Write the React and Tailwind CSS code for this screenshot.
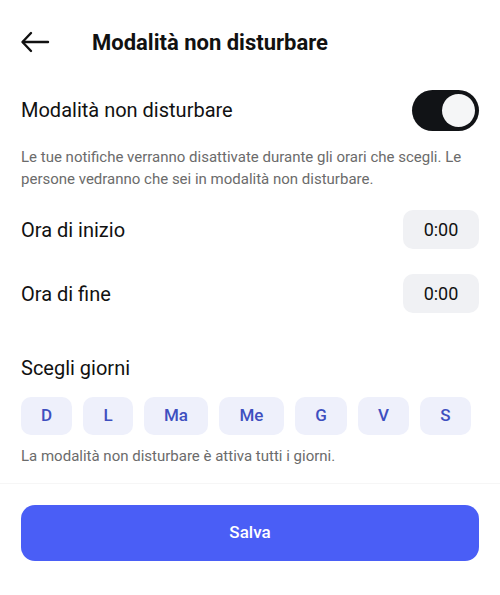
import { useState } from 'react'

const days = [
  { label: 'D', w: 'w-[51px]' },
  { label: 'L', w: 'w-[50px]' },
  { label: 'Ma', w: 'w-[64px]' },
  { label: 'Me', w: 'w-[65px]' },
  { label: 'G', w: 'w-[52px]' },
  { label: 'V', w: 'w-[51px]' },
  { label: 'S', w: 'w-[51px]' },
]

function TimeRow({ label, value }) {
  return (
    <div className="flex items-center justify-between h-[39px]">
      <span className="text-[20px] text-[#111]">{label}</span>
      <span className="w-[76px] h-[39px] rounded-[10px] bg-[#f0f1f4] flex items-center justify-center text-[18px] text-[#111]">
        {value}
      </span>
    </div>
  )
}

export default function App() {
  const [enabled, setEnabled] = useState(true)

  return (
    <div className="w-[500px] h-[595px] bg-white flex flex-col font-['Roboto',sans-serif]">

      <header className="h-[84px] flex items-center px-[20px]">
        <svg width="30" height="22" viewBox="0 0 30 22" fill="none" stroke="#111" strokeWidth="2.4" strokeLinecap="round" strokeLinejoin="round">
          <path d="M28 11H3" />
          <path d="M11 2L2.5 11L11 20" />
        </svg>
        <h1 className="ml-[42px] text-[22px] font-bold text-[#111]">Modalità non disturbare</h1>
      </header>

      <div className="px-[21px] flex flex-col">
        <div className="mt-[4px] flex items-center justify-between h-[44px]">
          <span className="text-[20px] text-[#111]">Modalità non disturbare</span>
          <button
            onClick={() => setEnabled(!enabled)}
            className={`w-[67px] h-[41px] rounded-full p-[4px] flex items-center ${enabled ? 'bg-[#111316] justify-end' : 'bg-[#d4d6da] justify-start'}`}
          >
            <span className="w-[33px] h-[33px] rounded-full bg-[#f5f6f7]"></span>
          </button>
        </div>

        <p className="mt-[14px] text-[15px] leading-[22px] text-[#6b6b6b]">
          Le tue notifiche verranno disattivate durante gli orari che scegli. Le persone vedranno che sei in modalità non disturbare.
        </p>

        <div className="mt-[20px] flex flex-col gap-[25px]">
          <TimeRow label="Ora di inizio" value="0:00" />
          <TimeRow label="Ora di fine" value="0:00" />
        </div>

        <h2 className="mt-[41px] text-[20px] text-[#111] leading-[28px]">Scegli giorni</h2>

        <div className="mt-[15px] flex gap-[11px]">
          {days.map((d) => (
            <span key={d.label} className={`${d.w} h-[38px] rounded-[10px] bg-[#eef0fb] flex items-center justify-center text-[17px] font-medium text-[#3e4fbf]`}>
              {d.label}
            </span>
          ))}
        </div>

        <p className="mt-[10px] text-[15px] leading-[22px] text-[#6b6b6b]">
          La modalità non disturbare è attiva tutti i giorni.
        </p>
      </div>

      <div className="mt-[16px] border-t border-[#f6f6f6] px-[21px] pt-[21px]">
        <button className="w-full h-[56px] rounded-[14px] bg-[#4a5ef6] text-white text-[17px] font-medium">
          Salva
        </button>
      </div>
    </div>
  )
}
